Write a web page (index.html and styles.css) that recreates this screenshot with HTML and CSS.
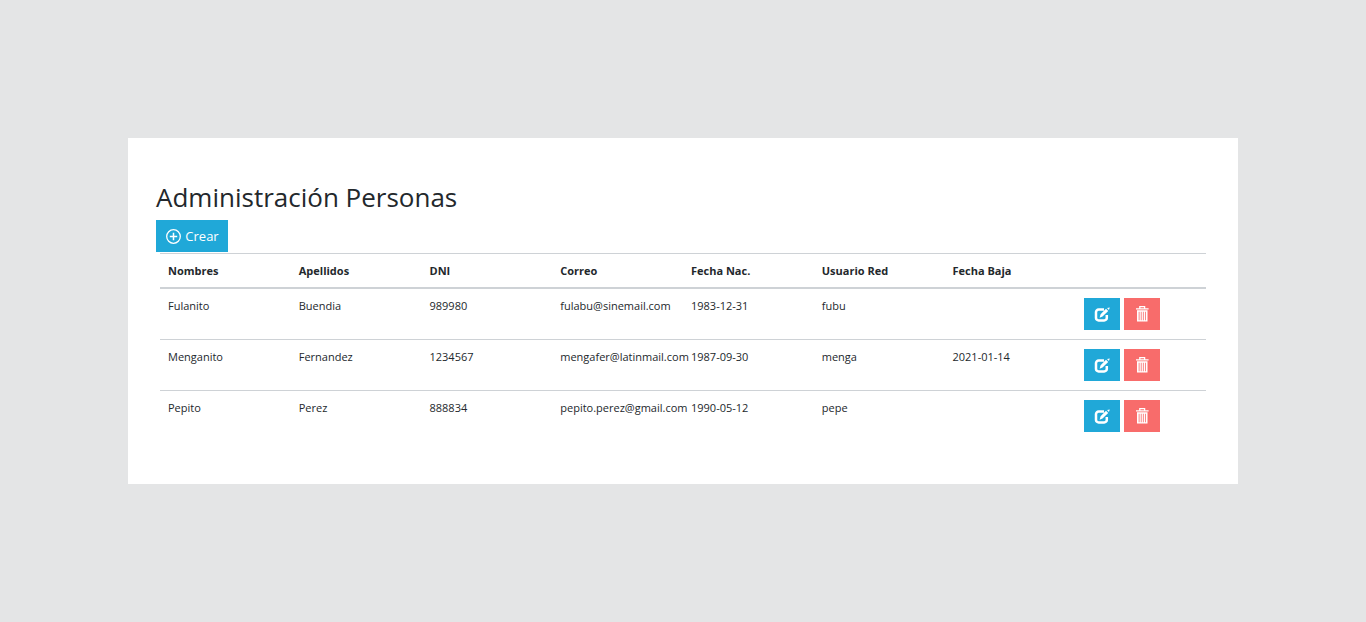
FILE: index.html
```html
<!DOCTYPE html>
<html lang="es">
<head>
<meta charset="utf-8">
<meta name="viewport" content="width=device-width, initial-scale=1">
<title>Administración Personas</title>
<link rel="stylesheet" href="styles.css">
</head>
<body>
<svg class="sprite" aria-hidden="true">
  <symbol id="icon-plus" viewBox="0 0 16 16">
    <circle cx="8.500" cy="8.500" r="6.800" fill="none" stroke="currentColor" stroke-width="1.300"/>
    <path d="M8.500 4.800v7.400M4.800 8.500h7.400" fill="none" stroke="currentColor" stroke-width="1.500"/>
  </symbol>
  <symbol id="icon-edit" viewBox="0 0 16 16">
    <path d="M10 3.500H4.600A2.600 2.600 0 0 0 2 6.100V11.900A2.600 2.600 0 0 0 4.600 14.500H10.200A2.600 2.600 0 0 0 12.800 11.900V9" fill="none" stroke="currentColor" stroke-width="2.500"/>
    <path d="M12 2.700L14.200 4.900L8.500 10.600L5.600 11.700L6.600 8.300ZM13 1.900L15.800 1.500L14.900 4.100Z" fill="currentColor"/>
  </symbol>
  <symbol id="icon-trash" viewBox="0 0 16 16">
    <path d="M5.800 2.500V.7h4.800v1.800M2 2.900h12.600" fill="none" stroke="currentColor" stroke-width="1.300"/>
    <path d="M3 4.300h10.500V15.500h-10.500ZM4.700 5.700v8.500h.8V5.700ZM6.800 5.700v8.500h.8V5.700ZM8.900 5.700v8.500h.8V5.700ZM11 5.700v8.500h.8V5.700Z" fill="currentColor" fill-rule="evenodd"/>
  </symbol>
</svg>
<main class="card">
  <h1 class="title">Administración Personas</h1>
  <button class="btn btn-create" type="button"><svg class="icon" aria-hidden="true"><use href="#icon-plus"/></svg>Crear</button>
  <table class="people">
    <thead>
      <tr><th>Nombres</th><th>Apellidos</th><th>DNI</th><th>Correo</th><th>Fecha Nac.</th><th>Usuario Red</th><th>Fecha Baja</th><td></td></tr>
    </thead>
    <tbody>
      <tr>
        <td>Fulanito</td><td>Buendia</td><td>989980</td><td>fulabu@sinemail.com</td><td>1983-12-31</td><td>fubu</td><td></td>
        <td><div class="actions"><button class="btn" type="button" aria-label="Editar"><svg class="icon"><use href="#icon-edit"/></svg></button><button class="btn btn-delete" type="button" aria-label="Eliminar"><svg class="icon"><use href="#icon-trash"/></svg></button></div></td>
      </tr>
      <tr>
        <td>Menganito</td><td>Fernandez</td><td>1234567</td><td>mengafer@latinmail.com</td><td>1987-09-30</td><td>menga</td><td>2021-01-14</td>
        <td><div class="actions"><button class="btn" type="button" aria-label="Editar"><svg class="icon"><use href="#icon-edit"/></svg></button><button class="btn btn-delete" type="button" aria-label="Eliminar"><svg class="icon"><use href="#icon-trash"/></svg></button></div></td>
      </tr>
      <tr>
        <td>Pepito</td><td>Perez</td><td>888834</td><td>pepito.perez@gmail.com</td><td>1990-05-12</td><td>pepe</td><td></td>
        <td><div class="actions"><button class="btn" type="button" aria-label="Editar"><svg class="icon"><use href="#icon-edit"/></svg></button><button class="btn btn-delete" type="button" aria-label="Eliminar"><svg class="icon"><use href="#icon-trash"/></svg></button></div></td>
      </tr>
    </tbody>
  </table>
</main>
</body>
</html>
```
FILE: styles.css
```css
* { box-sizing: border-box; }

body {
  margin: 0;
  min-height: 100vh;
  display: flex;
  align-items: center;
  justify-content: center;
  background: #e4e5e6;
  color: #23282c;
  font-family: "Open Sans", "Noto Sans", sans-serif;
  font-size: 11px;
  line-height: 18px;
}

.sprite { display: none; }

.card {
  width: 100%;
  max-width: 1110px;
  padding: 42px 32px 43px 28px;
  background: #fff;
}

.title {
  margin: 0 0 6px;
  font-size: 26px;
  font-weight: 400;
  line-height: 34px;
}

.btn {
  display: inline-flex;
  align-items: center;
  justify-content: center;
  gap: 4px;
  width: 36px;
  height: 32px;
  padding: 0;
  border: 0;
  background: #20a8d8;
  color: #fff;
  font-family: inherit;
  font-size: 13px;
  cursor: pointer;
}

.btn-create {
  display: flex;
  width: 72px;
}

.btn-delete { background: #f86c6b; }

.icon {
  width: 16px;
  height: 16px;
}

.people {
  width: calc(100% - 4px);
  margin: 1px 0 0 4px;
  table-layout: fixed;
  border-collapse: separate;
  border-spacing: 0;
}

.people th,
.people td {
  padding: 8px 0 8px 8px;
  border-top: 1px solid #ced2d6;
  text-align: left;
  vertical-align: top;
  white-space: nowrap;
}

.people thead th,
.people thead td {
  padding-bottom: 7px;
  border-bottom: 2px solid #ced2d6;
  font-weight: 700;
}

.people tbody td { height: 51px; }

.people tbody tr:first-child td {
  height: 50px;
  border-top: 0;
}

.actions {
  display: flex;
  gap: 4px;
  padding: 1px 0 0 1px;
}
```
